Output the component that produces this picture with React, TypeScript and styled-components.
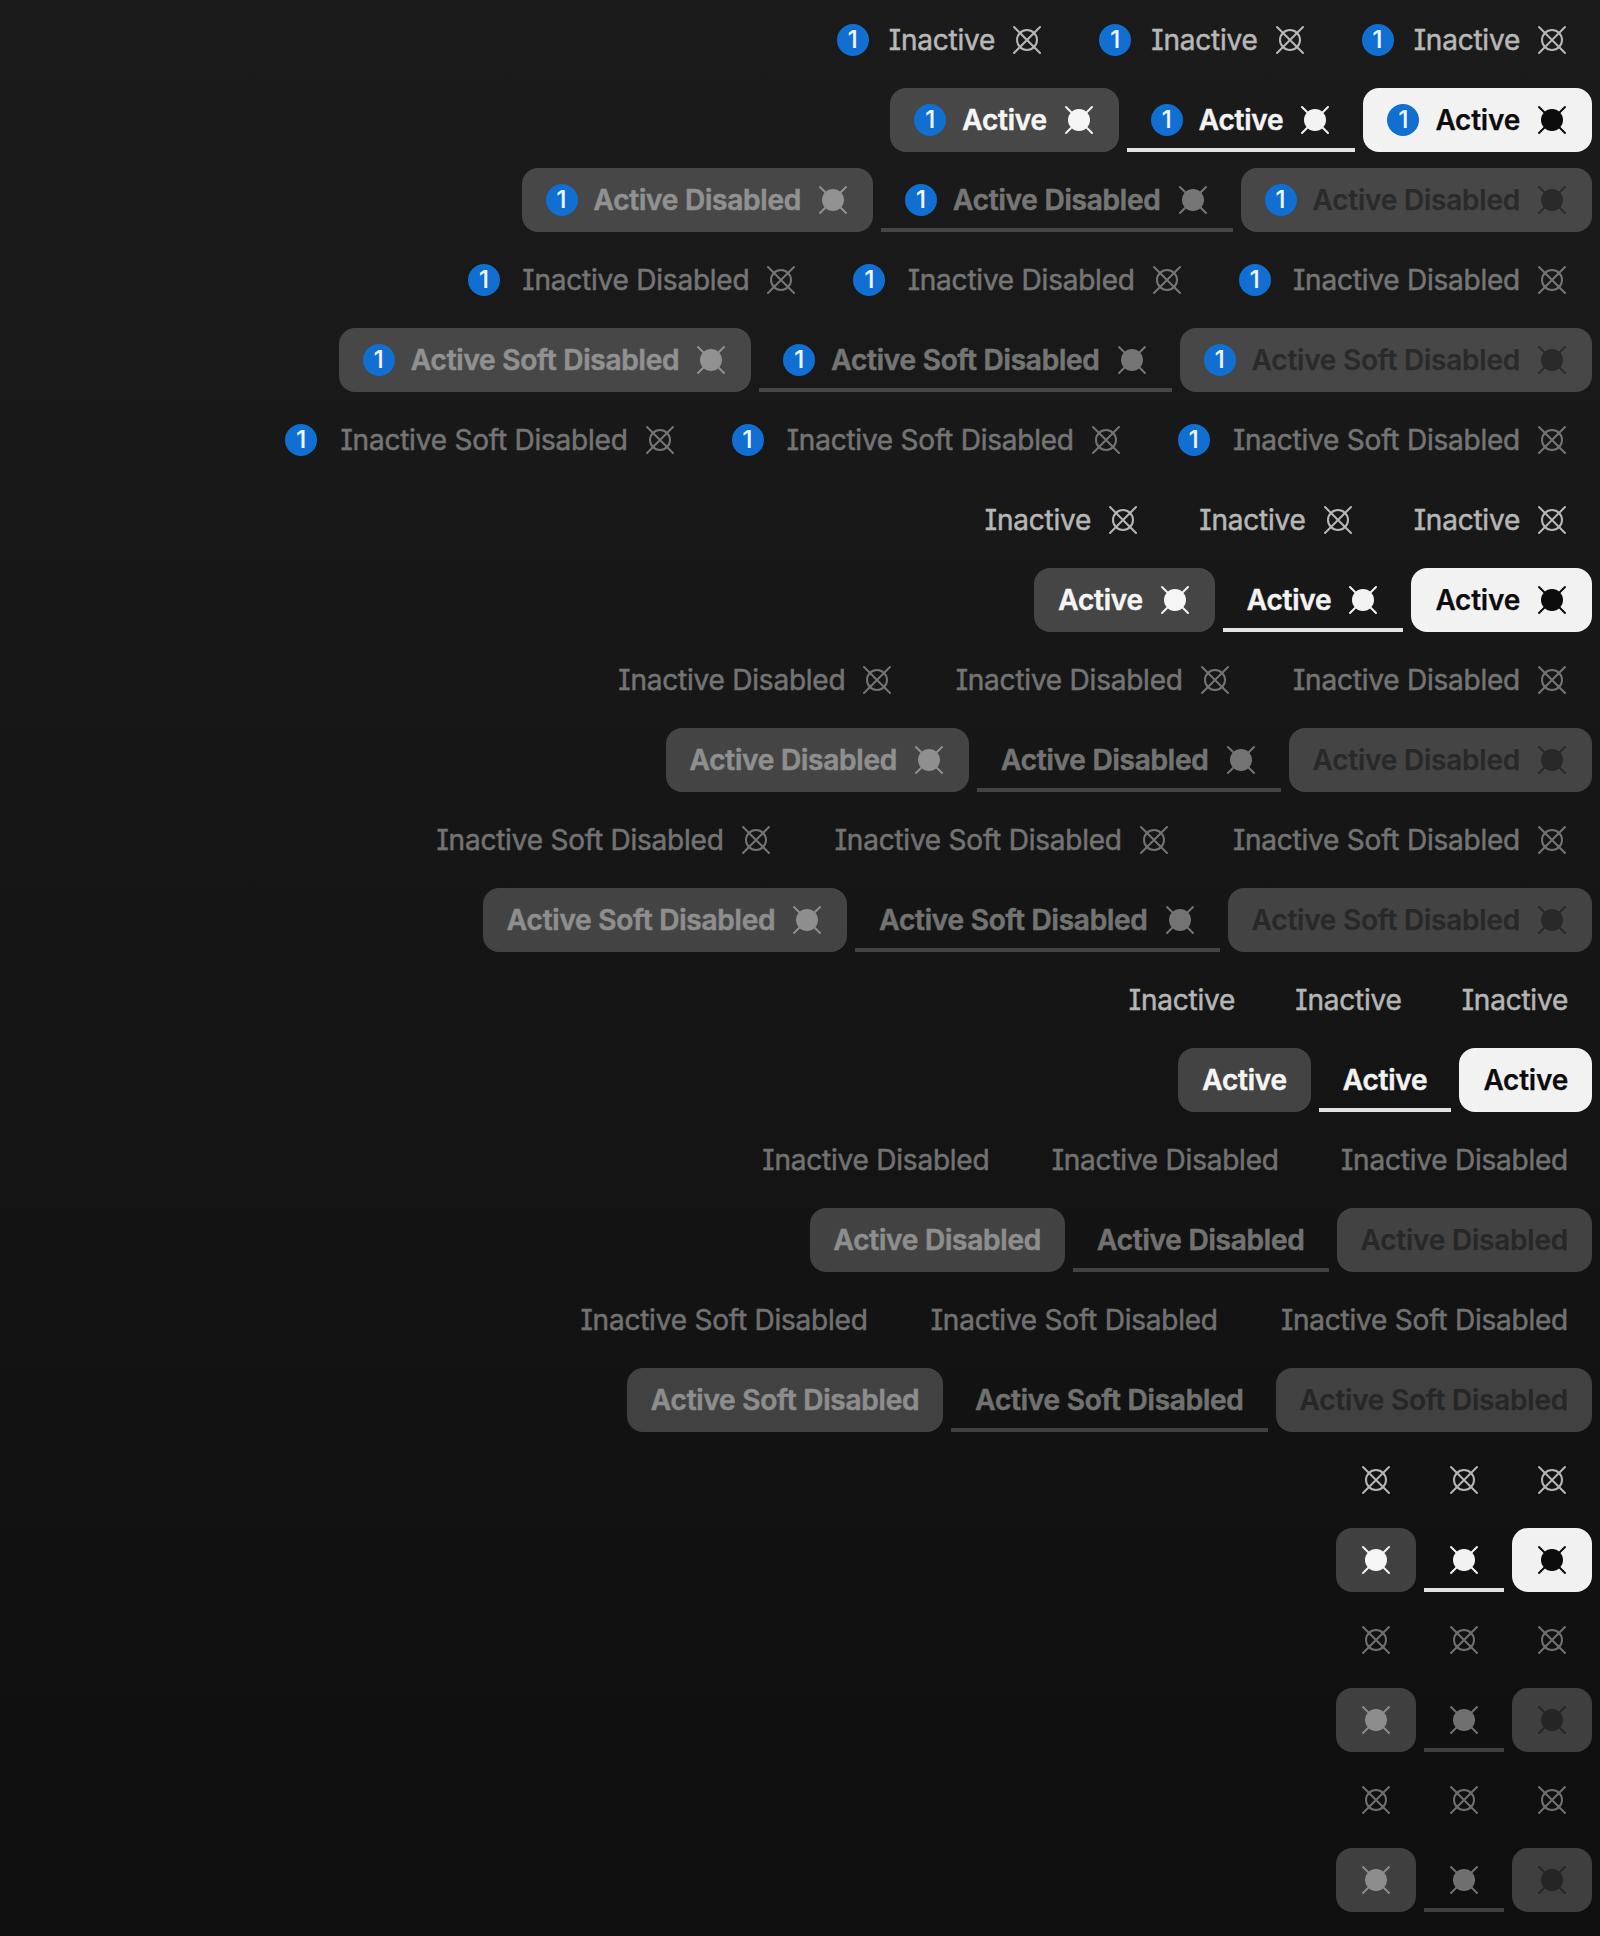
import React from 'react';
import styled, { createGlobalStyle, css } from 'styled-components';

type Variant = 'solid' | 'underline' | 'soft';
type State = 'normal' | 'disabled';

const GlobalStyle = createGlobalStyle`
  *, *::before, *::after { box-sizing: border-box; }
  body {
    margin: 0;
    background: #0f0f0f;
    font-family: Inter, Roboto, "Liberation Sans", sans-serif;
  }
`;

const Page = styled.main`
  display: flex;
  flex-direction: column;
  gap: 16px;
  width: 100%;
  height: 1936px;
  padding: 8px;
  background: linear-gradient(#1b1b1b, #0f0f0f);
`;

const Row = styled.div`
  display: flex;
  gap: 8px;
  height: 64px;
`;

const surface = (variant: Variant, disabled: boolean) => {
  if (variant === 'underline') {
    return css`
      box-shadow: inset 0 -4px rgba(255, 255, 255, ${disabled ? 0.2 : 0.88});
    `;
  }
  const filled = variant === 'solid' && !disabled;
  return css`
    border-radius: 16px;
    background: rgba(255, 255, 255, ${filled ? 0.945 : 0.2});
  `;
};

const isDarkInk = (variant: Variant, active: boolean) => variant === 'solid' && active;

const inkOpacity = (active: boolean, disabled: boolean) =>
  disabled ? 0.4 : active ? 0.95 : 0.69;

const TabButton = styled.button<{ $variant: Variant; $active: boolean; $disabled: boolean }>`
  display: flex;
  align-items: center;
  gap: 16px;
  flex: none;
  height: 64px;
  padding: 0 24px;
  border: 0;
  background: none;
  font: inherit;
  color: ${(p) => (isDarkInk(p.$variant, p.$active) ? '#000' : '#fff')};
  ${(p) => p.$active && surface(p.$variant, p.$disabled)}
`;

const Glyph = styled.svg<{ $opacity: number }>`
  flex: none;
  width: 32px;
  height: 32px;
  opacity: ${(p) => p.$opacity};
`;

const Label = styled.span<{ $active: boolean; $dark: boolean; $opacity: number }>`
  display: grid;
  justify-items: start;
  font-size: 28px;
  line-height: 40px;
  font-weight: ${(p) => (p.$active ? 600 : 400)};
  letter-spacing: -0.224px;
  font-feature-settings: "cv08" 1;
  -webkit-text-stroke: ${(p) => (p.$dark ? 0.25 : p.$active ? 0.5 : 0.4)}px currentColor;
  white-space: nowrap;
  opacity: ${(p) => p.$opacity};

  /* Reserves the width of the active weight so that tabs keep their size. */
  &::after {
    content: attr(data-text);
    height: 0;
    overflow: hidden;
    visibility: hidden;
    font-weight: 600;
  }
`;

const Badge = styled.span`
  display: flex;
  align-items: center;
  justify-content: center;
  flex: none;
  width: 32px;
  height: 32px;
  padding-bottom: 1px;
  border-radius: 50%;
  background: #106fd1;
  color: rgba(255, 255, 255, 0.95);
  font-size: 24px;
  line-height: 32px;
  font-weight: 500;
  -webkit-text-stroke: 0.2px currentColor;
`;

function CrossedCircle({ filled, opacity }: { filled: boolean; opacity: number }) {
  return (
    <Glyph viewBox="0 0 32 32" $opacity={opacity} fill="none" stroke="currentColor" strokeWidth="2" strokeLinecap="round">
      <circle cx="16" cy="16" r="10" fill={filled ? 'currentColor' : 'none'} />
      <path d="M3 3 29 29M29 3 3 29" />
    </Glyph>
  );
}

interface TabProps {
  variant: Variant;
  active: boolean;
  state: State;
  label?: string;
  icon: boolean;
  badge: boolean;
}

function Tab({ variant, active, state, label, icon, badge }: TabProps) {
  const disabled = state === 'disabled';
  const opacity = inkOpacity(active, disabled);
  return (
    <TabButton type="button" $variant={variant} $active={active} $disabled={disabled}>
      {icon && <CrossedCircle filled={active} opacity={opacity} />}
      {label && (
        <Label $active={active} $dark={isDarkInk(variant, active)} $opacity={opacity} data-text={label}>
          {label}
        </Label>
      )}
      {badge && <Badge>1</Badge>}
    </TabButton>
  );
}

const variants: Variant[] = ['solid', 'underline', 'soft'];

const badgedRows = [
  'Inactive',
  'Active',
  'Active Disabled',
  'Inactive Disabled',
  'Active Soft Disabled',
  'Inactive Soft Disabled',
];

const plainRows = [
  'Inactive',
  'Active',
  'Inactive Disabled',
  'Active Disabled',
  'Inactive Soft Disabled',
  'Active Soft Disabled',
];

const sections = [
  { id: 'badge-text-icon', icon: true, badge: true, text: true, rows: badgedRows },
  { id: 'text-icon', icon: true, badge: false, text: true, rows: plainRows },
  { id: 'text', icon: false, badge: false, text: true, rows: plainRows },
  { id: 'icon', icon: true, badge: false, text: false, rows: plainRows },
];

export default function App() {
  return (
    <>
      <GlobalStyle />
      <Page dir="rtl">
        {sections.map((section) =>
          section.rows.map((name) => (
            <Row key={`${section.id}-${name}`}>
              {variants.map((variant) => (
                <Tab
                  key={variant}
                  variant={variant}
                  active={name.startsWith('Active')}
                  state={name.includes('Disabled') ? 'disabled' : 'normal'}
                  label={section.text ? name : undefined}
                  icon={section.icon}
                  badge={section.badge}
                />
              ))}
            </Row>
          )),
        )}
      </Page>
    </>
  );
}
